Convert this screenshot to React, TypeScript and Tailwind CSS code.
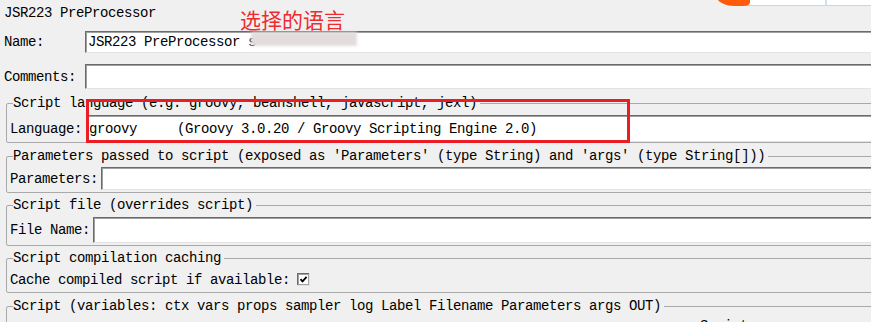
import React from 'react';

// JMeter JSR223 PreProcessor panel (Swing look, light gray)

const sunken =
  'border-t border-l border-[#6b6b6b] border-b border-b-[#e3e3e3] shadow-[inset_1px_1px_0_#a0a0a0] bg-white';

function Field({children, className = ''}: {children?: React.ReactNode; className?: string}) {
  return (
    <div className={`flex flex-1 items-center pl-[2px] whitespace-pre ${sunken} ${className}`}>
      {children}
    </div>
  );
}

function Group({
  title,
  className = '',
  children,
}: {
  title: string;
  className?: string;
  children: React.ReactNode;
}) {
  return (
    <fieldset className={`ml-[6px] rounded-[2px] border border-[#a9a9a9] ${className}`}>
      <legend className="ml-[6px] pr-[3px] leading-[18px] whitespace-pre">{title}</legend>
      {children}
    </fieldset>
  );
}

function CheckBox() {
  return (
    <svg width="13" height="13" viewBox="0 0 13 13" aria-hidden="true">
      <rect x="0" y="0" width="13" height="13" fill="#e3e3e3" />
      <rect x="0" y="0" width="12" height="12" fill="#6b6b6b" />
      <rect x="1" y="1" width="11" height="11" fill="#a0a0a0" />
      <rect x="2" y="2" width="9" height="9" fill="#fff" />
      <path d="M3.5 6.2 5.5 8.4 9.6 3.8" stroke="#000" strokeWidth="1.8" fill="none" />
    </svg>
  );
}

export default function App() {
  return (
    <div className="relative h-[322px] w-[871px] overflow-hidden bg-[#f0f0f0] font-['Liberation_Mono',monospace] text-[14px] leading-[18px] tracking-[-0.4px] text-black">
      <div className="flex w-[900px] flex-col">
        <div className="h-[31px] pl-[4px] pt-[4px]">JSR223 PreProcessor</div>

        <div className="flex h-[22px]">
          <div className="flex w-[85px] items-center pl-[4px]">Name:</div>
          <Field>
            <span className="relative">
              JSR223 PreProcessor s
              <span className="absolute left-[163px] top-[-1px] h-[14px] w-[106px] bg-[#e2dcdc] blur-[1.5px]" />
            </span>
          </Field>
        </div>

        <div className="mt-[11px] flex h-[25px]">
          <div className="flex w-[85px] items-center pl-[4px]">Comments:</div>
          <Field />
        </div>

        <Group title="Script language (e.g. groovy, beanshell, javascript, jexl)" className="mt-[5px]">
          <div className="mt-[3px] flex h-[27px] pl-[3px]">
            <div className="flex items-center pr-[4px]">Language:</div>
            <Field>groovy     (Groovy 3.0.20 / Groovy Scripting Engine 2.0)</Field>
          </div>
        </Group>

        <Group
          title="Parameters passed to script (exposed as 'Parameters' (type String) and 'args' (type String[]))"
          className="mt-[4px] pb-[2px]"
        >
          <div className="mt-[2px] flex h-[23px] pl-[3px]">
            <div className="flex items-center pr-[3px]">Parameters:</div>
            <Field />
          </div>
        </Group>

        <Group title="Script file (overrides script)" className="mt-[3px] pb-[2px]">
          <div className="mt-[3px] flex h-[26px] pl-[3px]">
            <div className="flex items-center pr-[3px]">File Name:</div>
            <Field />
          </div>
        </Group>

        <Group title="Script compilation caching" className="mt-[3px]">
          <div className="flex h-[25px] items-center gap-[7px] pl-[3px]">
            <span>Cache compiled script if available:</span>
            <CheckBox />
          </div>
        </Group>

        <Group title="Script (variables: ctx vars props sampler log Label Filename Parameters args OUT)" className="mt-[4px]">
          <div className="h-[30px] pl-[693px] pt-[2px]">Script:</div>
        </Group>
      </div>

      {/* annotation overlay from the screenshot */}
      <div className="pointer-events-none absolute left-[240px] top-[7px] font-['Noto_Sans_CJK_SC',sans-serif] text-[21px] leading-[24px] tracking-normal text-[#ee2b2f]">
        选择的语言
      </div>
      <div className="pointer-events-none absolute left-[86px] top-[99px] h-[44px] w-[544px] border-[3px] border-[#ec1c24]" />

      <div className="absolute left-[745px] top-0 h-[6px] w-[130px] border-b border-[#c3d6ee] bg-white">
        <div className="absolute left-[80px] top-0 h-[5px] w-[2px] bg-[#cfe0f5]" />
      </div>
      <div className="absolute left-[716px] top-[-14px] h-[20px] w-[34px] rounded-[50%_50%_20%_60%] bg-[#ff5a0a]" />
    </div>
  );
}
